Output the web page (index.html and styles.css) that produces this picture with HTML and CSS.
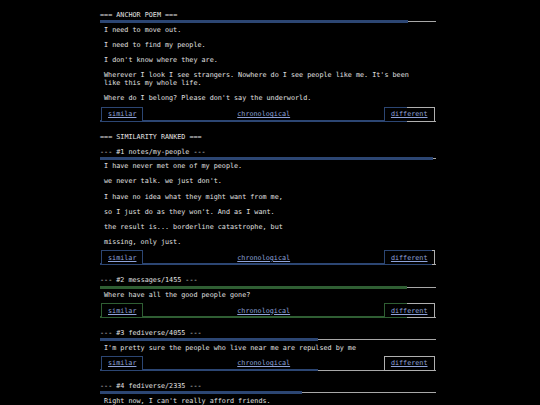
FILE: index.html
```html
<!DOCTYPE html>
<html>
<head>
<meta charset="utf-8">
<link rel="stylesheet" href="styles.css">
</head>
<body>
<main class="page">
  <section class="card">
    <div class="title">=== ANCHOR POEM ===</div>
    <div class="bar" style="--p:91.7%"></div>
    <div class="body">
      <p>I need to move out.</p>
      <p>I need to find my people.</p>
      <p>I don't know where they are.</p>
      <p>Wherever I look I see strangers. Nowhere do I see people like me. It's been like this my whole life.</p>
      <p>Where do I belong? Please don't say the underworld.</p>
    </div>
    <div class="actions" style="--p:91.7%">
      <a class="btn" style="--s:100%">similar</a>
      <a class="link">chronological</a>
      <a class="btn" style="--s:23px">different</a>
    </div>
  </section>

  <div class="heading">=== SIMILARITY RANKED ===</div>

  <section class="card">
    <div class="title">--- #1 notes/my-people ---</div>
    <div class="bar" style="--p:99.1%"></div>
    <div class="body">
      <p>I have never met one of my people.</p>
      <p>we never talk. we just don't.</p>
      <p>I have no idea what they might want from me,</p>
      <p>so I just do as they won't. And as I want.</p>
      <p>the result is... borderline catastrophe, but</p>
      <p>missing, only just.</p>
    </div>
    <div class="actions" style="--p:99.1%">
      <a class="btn" style="--s:100%">similar</a>
      <a class="link">chronological</a>
      <a class="btn" style="--s:48px">different</a>
    </div>
  </section>

  <section class="card card-green">
    <div class="title">--- #2 messages/1455 ---</div>
    <div class="bar" style="--p:91.5%"></div>
    <div class="body">
      <p>Where have all the good people gone?</p>
    </div>
    <div class="actions" style="--p:91.5%">
      <a class="btn" style="--s:100%">similar</a>
      <a class="link">chronological</a>
      <a class="btn" style="--s:23px">different</a>
    </div>
  </section>

  <section class="card">
    <div class="title">--- #3 fediverse/4055 ---</div>
    <div class="bar" style="--p:64.9%"></div>
    <div class="body">
      <p>I'm pretty sure the people who live near me are repulsed by me</p>
    </div>
    <div class="actions" style="--p:64.9%">
      <a class="btn" style="--s:100%">similar</a>
      <a class="link">chronological</a>
      <a class="btn" style="--s:0px">different</a>
    </div>
  </section>

  <section class="card">
    <div class="title">--- #4 fediverse/2335 ---</div>
    <div class="bar" style="--p:60.1%"></div>
    <div class="body">
      <p>Right now, I can't really afford friends.</p>
    </div>
  </section>
</main>
</body>
</html>
```

FILE: styles.css
```css
html, body {
  margin: 0;
  padding: 0;
  background: #000;
}

body {
  font-family: "DejaVu Sans Mono", "Liberation Mono", monospace;
  font-size: 6.75px;
  line-height: 8.1px;
  color: #e0e0e0;
}

.page {
  width: 336px;
  margin-left: 100px;
  padding-top: 11px;
}

.card {
  --c: #2c4673;
  margin-bottom: 11px;
}

.card-green {
  --c: #2f5e33;
}

.title,
.heading {
  white-space: pre;
  color: #e0e0e0;
}

.heading {
  margin-bottom: 7px;
}

.bar {
  height: 3px;
  margin-top: 1.2px;
  background:
    linear-gradient(to right, var(--c) 0, var(--c) var(--p), transparent var(--p)) no-repeat,
    linear-gradient(#a8a8a8, #a8a8a8) left center / 100% 1px no-repeat;
}

.body {
  display: flex;
  flex-direction: column;
  gap: 7.1px;
  padding: 2.3px 14px 4px 4px;
}

.body p {
  margin: 0;
}

.actions {
  display: flex;
  justify-content: space-between;
  align-items: flex-end;
  padding: 0 1.5px 0 1px;
  background:
    linear-gradient(to right, var(--c) 0, var(--c) var(--p), transparent var(--p)) left bottom / 100% 2px no-repeat,
    linear-gradient(#a8a8a8, #a8a8a8) left bottom / 100% 1px no-repeat;
}

.btn,
.link {
  color: #8fa3da;
  text-decoration: underline;
}

.btn {
  padding: 2.5px 6px;
  border: 1px solid transparent;
  background:
    linear-gradient(#000, #000) padding-box,
    linear-gradient(to right, var(--c) 0, var(--c) var(--s), #b0b0b0 var(--s)) border-box;
}

.link {
  padding: 3.5px 0;
}
```
